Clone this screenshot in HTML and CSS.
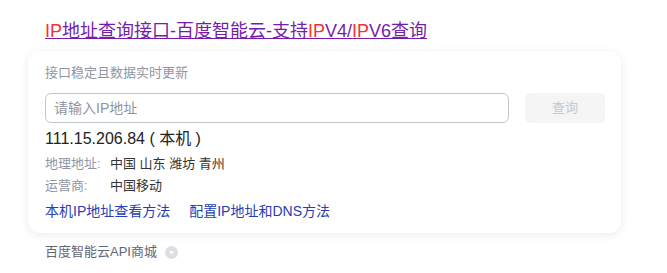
FILE: index.html
```html
<!DOCTYPE html>
<html lang="zh-CN">
<head>
<meta charset="utf-8">
<link rel="stylesheet" href="styles.css">
</head>
<body>
<div class="result">
  <h3 class="title"><a href="#"><em>IP</em>地址查询接口-百度智能云-支持<em>IP</em>V4/<em>IP</em>V6查询</a></h3>
  <div class="card">
    <div class="sub">接口稳定且数据实时更新</div>
    <div class="search">
      <div class="input">请输入IP地址</div>
      <div class="btn">查询</div>
    </div>
    <div class="ip">111.15.206.84 ( 本机 )</div>
    <div class="row"><span class="label">地理地址:</span><span class="val">中国 山东 潍坊 青州</span></div>
    <div class="row"><span class="label">运营商:</span><span class="val">中国移动</span></div>
    <div class="links"><a href="#">本机IP地址查看方法</a><a href="#">配置IP地址和DNS方法</a></div>
  </div>
  <div class="source">百度智能云API商城<span class="arrow"><svg width="13" height="13" viewBox="0 0 13 13"><circle cx="6.5" cy="6.5" r="6.5" fill="#dcdee3"/><path d="M3.8 5.2 L9.2 5.2 L6.5 8.4 Z" fill="#fff"/></svg></span></div>
</div>
</body>
</html>
```
FILE: styles.css
```css
* { box-sizing: border-box; }
body {
  margin: 0;
  background: #fff;
  font-family: "Liberation Sans", Arial, "Noto Sans CJK SC", sans-serif;
  color: #222;
}
.result {
  padding: 19px 0 0 28px;
  width: 621px;
}
.title {
  margin: 0 0 8px 17px;
  font-size: 18px;
  font-weight: normal;
  line-height: 24px;
}
.title a {
  color: #771caa;
  text-decoration: underline;
}
.title em {
  font-style: normal;
  color: #f73131;
}
.card {
  border-radius: 12px;
  box-shadow: 0 2px 10px rgba(0,0,0,0.08);
  padding: 12px 16px 12px 17px;
  background: #fff;
}
.sub {
  font-size: 13px;
  line-height: 20px;
  color: #9195a3;
  margin-bottom: 10px;
}
.search {
  display: flex;
  gap: 16px;
  margin-bottom: 5px;
}
.input {
  flex: 1;
  height: 30px;
  border: 1px solid #c4c7ce;
  border-radius: 6px;
  font-size: 14px;
  line-height: 28px;
  padding-left: 8px;
  color: #9195a3;
}
.btn {
  width: 80px;
  height: 30px;
  border-radius: 6px;
  background: #f5f5f6;
  color: #c4c7ce;
  font-size: 13px;
  line-height: 30px;
  text-align: center;
}
.ip {
  font-size: 16px;
  line-height: 22px;
  color: #222;
  margin-bottom: 4px;
}
.row {
  display: flex;
  font-size: 13px;
  line-height: 20px;
  margin-bottom: 2px;
}
.label {
  width: 65px;
  color: #9195a3;
}
.val { color: #333; }
.links {
  margin-top: 5px;
  font-size: 14px;
  line-height: 20px;
  display: flex;
  gap: 19px;
}
.links a {
  color: #2440b3;
  text-decoration: none;
}
.source {
  margin: 9px 0 0 17px;
  font-size: 13px;
  line-height: 20px;
  color: #626675;
  display: flex;
  align-items: center;
}
.arrow {
  display: inline-flex;
  margin-left: 8px;
}
```
